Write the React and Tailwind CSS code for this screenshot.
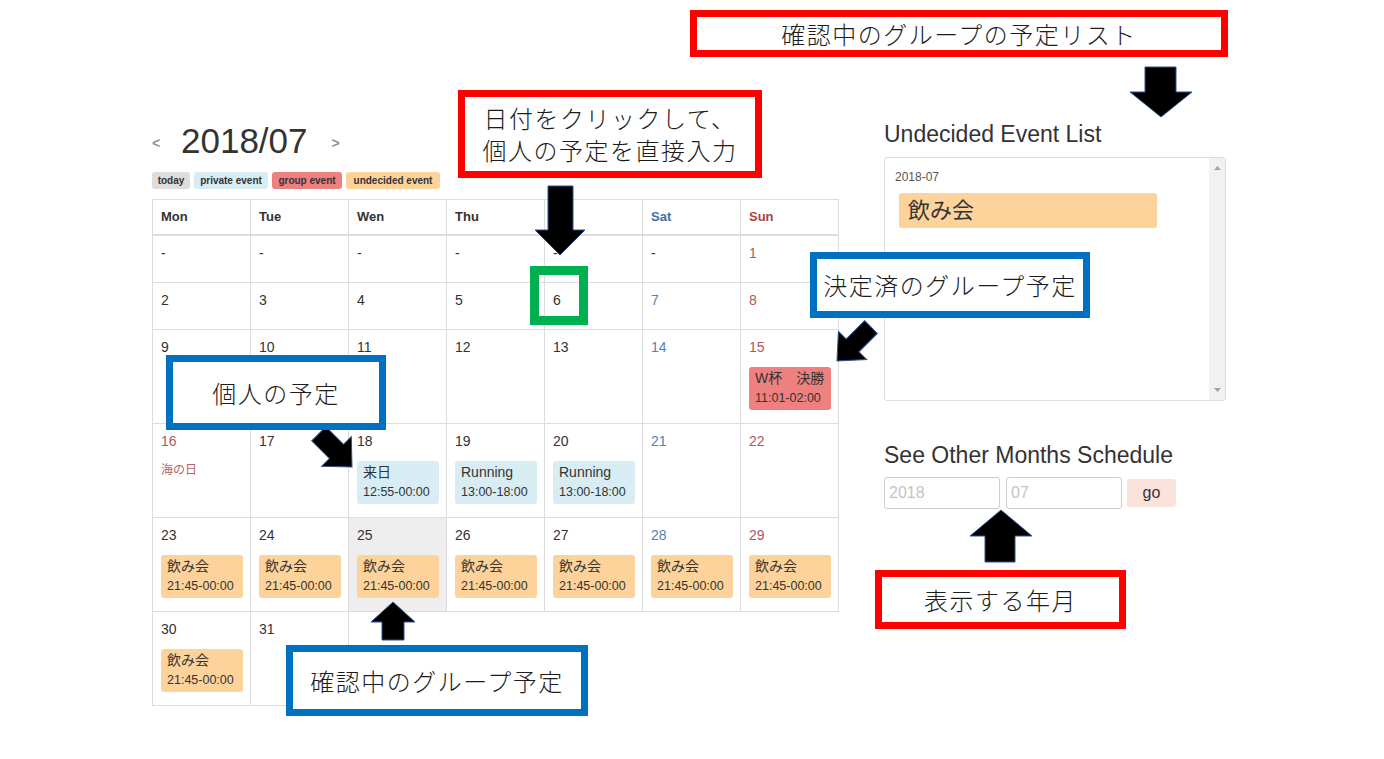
import React from 'react';

const weeks = [
  ['-', '-', '-', '-', '-', '-', '1'],
  ['2', '3', '4', '5', '6', '7', '8'],
  ['9', '10', '11', '12', '13', '14', '15'],
  ['16', '17', '18', '19', '20', '21', '22'],
  ['23', '24', '25', '26', '27', '28', '29'],
  ['30', '31'],
];

const heads = ['Mon', 'Tue', 'Wen', 'Thu', 'Fri', 'Sat', 'Sun'];

const nomikai = { title: '飲み会', time: '21:45-00:00', type: 'undecided' };

// events per day
const events = {
  15: { title: 'W杯　決勝', time: '11:01-02:00', type: 'group' },
  18: { title: '来日', time: '12:55-00:00', type: 'private' },
  19: { title: 'Running', time: '13:00-18:00', type: 'private' },
  20: { title: 'Running', time: '13:00-18:00', type: 'private' },
  23: nomikai, 24: nomikai, 25: nomikai, 26: nomikai, 27: nomikai, 28: nomikai, 29: nomikai, 30: nomikai,
};

const eventBg = {
  private: 'bg-[#d7edf3]',
  group: 'bg-[#ef8080]',
  undecided: 'bg-[#fdd39b]',
};

const rowHeights = ['h-[47px]', 'h-[47px]', 'h-[94px]', 'h-[94px]', 'h-[94px]', 'h-[94px]'];

const dayColor = (col, day) => {
  if (day === '-') return 'text-[#333]';
  if (col === 6 || day === '16') return 'text-[#ad5a5a]';
  if (col === 5) return 'text-[#5283b8]';
  return 'text-[#333]';
};

const headColor = (col) => {
  if (col === 5) return 'text-[#3a70a8]';
  if (col === 6) return 'text-[#a94442]';
  return 'text-[#333]';
};

function EventBox({ ev }) {
  return (
    <div className={`mt-[11px] w-[82px] h-[43px] rounded-[3px] px-[6px] pt-[2px] ${eventBg[ev.type]}`}>
      <div className="text-[14px] leading-[18px] text-[#333] whitespace-nowrap">{ev.title}</div>
      <div className="text-[12.5px] leading-[16px] mt-[3px] text-[#333] whitespace-nowrap">{ev.time}</div>
    </div>
  );
}

function DayCell({ day, col, row }) {
  const ev = events[day];
  const today = day === '25';
  return (
    <div className={`border-r border-b border-[#ddd] px-[8px] pt-[8px] ${rowHeights[row]} ${today ? 'bg-[#eee]' : ''}`}>
      <div className={`text-[14px] leading-[18px] ${dayColor(col, day)}`}>{day}</div>
      {day === '16' && (
        <div className="mt-[12px] text-[12px] leading-[16px] text-[#b46464]">海の日</div>
      )}
      {ev && <EventBox ev={ev} />}
    </div>
  );
}

function Calendar() {
  return (
    <div className="w-[687px]">
      <div className="h-[38px] flex items-center">
        <span className="w-[29px] mt-[4px] text-[14px] font-bold text-[#7b96b6]">&lt;</span>
        <span className="text-[35px] leading-[38px] text-[#333]">2018/07</span>
        <span className="ml-[24px] mt-[4px] text-[14px] font-bold text-[#7b96b6]">&gt;</span>
      </div>
      <div className="mt-[12px] h-[17px] flex gap-[4px] text-[10px] font-bold text-[#333] leading-[17px]">
        <span className="w-[38px] text-center rounded-[3px] bg-[#ddd]">today</span>
        <span className="w-[74px] text-center rounded-[3px] bg-[#d7edf3]">private event</span>
        <span className="w-[70px] text-center rounded-[3px] bg-[#ef8080]">group event</span>
        <span className="w-[94px] text-center rounded-[3px] bg-[#fdd39b]">undecided event</span>
      </div>
      <div className="mt-[10px] grid grid-cols-[repeat(7,98px)] border-l border-t border-[#ddd] w-[687px]">
        {heads.map((h, i) => (
          <div key={h} className={`h-[36px] border-r border-b-2 border-[#ddd] px-[8px] flex items-center text-[13px] font-bold ${headColor(i)}`}>
            {h}
          </div>
        ))}
        {weeks.map((week, r) =>
          week.map((d, c) => <DayCell key={`${r}-${c}`} day={d} col={c} row={r} />)
        )}
      </div>
    </div>
  );
}

function SidePanel() {
  return (
    <div className="w-[342px] text-[#333]">
      <div className="text-[23px] leading-[24px]">Undecided Event List</div>
      <div className="mt-[11px] h-[244px] border border-[#ddd] rounded-[3px] flex">
        <div className="flex-1 pl-[10px] pt-[11px]">
          <div className="text-[12px] leading-[16px] text-[#555]">2018-07</div>
          <div className="mt-[8px] ml-[4px] w-[258px] h-[35px] rounded-[3px] bg-[#fdd39b] pl-[9px] flex items-center text-[22px] text-[#333]">
            飲み会
          </div>
        </div>
        <div className="w-[16px] bg-[#f1f1f1] flex flex-col items-center justify-between py-[8px]">
          <svg width="7" height="4" viewBox="0 0 7 4"><path d="M3.5 0L7 4H0z" fill="#a3a3a3" /></svg>
          <svg width="7" height="4" viewBox="0 0 7 4"><path d="M0 0h7L3.5 4z" fill="#a3a3a3" /></svg>
        </div>
      </div>
      <div className="mt-[42px] text-[23px] leading-[24px]">See Other Months Schedule</div>
      <div className="mt-[10px] flex items-center gap-[6px]">
        <div className="w-[116px] h-[32px] border border-[#ccc] rounded-[3px] px-[4px] flex items-center text-[16px] text-[#c4c4c4]">2018</div>
        <div className="w-[116px] h-[32px] border border-[#ccc] rounded-[3px] px-[4px] flex items-center text-[16px] text-[#c4c4c4]">07</div>
        <div className="ml-[-1px] w-[49px] h-[28px] rounded-[3px] bg-[#fbe3dc] flex items-center justify-center text-[16px] text-[#333]">go</div>
      </div>
    </div>
  );
}

function Note({ className, children }) {
  return (
    <div className={`absolute bg-white flex flex-col items-center justify-center font-['Noto_Sans_CJK_JP',sans-serif] font-light text-[24px] leading-[32px] tracking-[1.5px] text-[#1c1c1c] ${className}`}>
      {children}
    </div>
  );
}

function Arrows() {
  const diag = (w, hw, hl, L) =>
    `${-w / 2},${-L} ${w / 2},${-L} ${w / 2},${-hl} ${hw / 2},${-hl} 0,0 ${-hw / 2},${-hl} ${-w / 2},${-hl}`;
  return (
    <svg className="absolute left-0 top-0 pointer-events-none" width="1384" height="759" viewBox="0 0 1384 759">
      <g fill="#000" stroke="#2f528f" strokeWidth="1" strokeLinejoin="miter">
        <polygon points="1145,67 1176,67 1176,92 1192,92 1161,117 1130,92 1145,92" />
        <polygon points="548,186 573,186 573,230 585,230 560,255 535,230 548,230" />
        <polygon points="393,602 415,622 404,622 404,640 382,640 382,622 371,622" />
        <polygon points="1001,510 1032,536 1015,536 1015,562 985,562 985,536 970,536" />
        <polygon transform="translate(837,361) rotate(45)" points={diag(18, 40, 22, 48)} />
        <polygon transform="translate(352,467) rotate(-45)" points={diag(20, 42, 22, 47)} />
      </g>
    </svg>
  );
}

export default function App() {
  return (
    <div className="relative w-[1384px] h-[759px] overflow-hidden bg-white font-['Liberation_Sans','Noto_Sans_CJK_JP',sans-serif]">
      <div className="pt-[122px] pl-[152px] flex gap-[45px]">
        <Calendar />
        <SidePanel />
      </div>

      <Arrows />

      <Note className="left-[690px] top-[10px] w-[538px] h-[47px] border-[7px] border-[#ff0000]">
        確認中のグループの予定リスト
      </Note>
      <Note className="left-[458px] top-[90px] w-[304px] h-[88px] border-[7px] border-[#ff0000]">
        <div>日付をクリックして、</div>
        <div>個人の予定を直接入力</div>
      </Note>
      <div className="absolute left-[530px] top-[266px] w-[58px] h-[59px] border-[9px] border-[#00b050]" />
      <Note className="left-[810px] top-[252px] w-[280px] h-[66px] border-[7px] border-[#0070c0]">
        決定済のグループ予定
      </Note>
      <Note className="left-[166px] top-[355px] w-[220px] h-[75px] border-[7px] border-[#0070c0]">
        個人の予定
      </Note>
      <Note className="left-[286px] top-[645px] w-[302px] h-[71px] border-[7px] border-[#0070c0]">
        確認中のグループ予定
      </Note>
      <Note className="left-[875px] top-[570px] w-[251px] h-[59px] border-[7px] border-[#ff0000]">
        表示する年月
      </Note>
    </div>
  );
}
